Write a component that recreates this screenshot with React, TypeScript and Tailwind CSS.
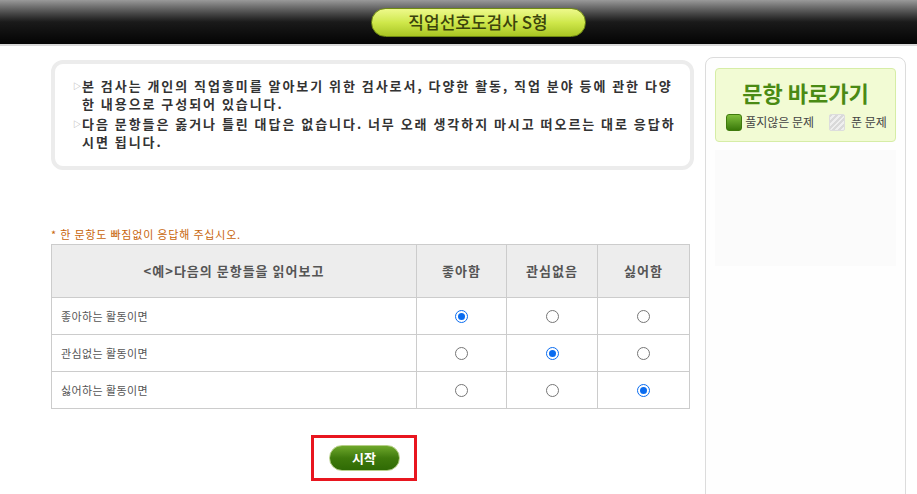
import React from "react";

const KR = { fontFamily: '"Noto Sans CJK KR", "Noto Sans", sans-serif' };

function Radio({ checked }: { checked: boolean }) {
  return checked ? (
    <span className="inline-flex h-[13px] w-[13px] items-center justify-center rounded-full border border-[#0a6cf0] bg-white">
      <span className="h-[7px] w-[7px] rounded-full bg-[#0a6cf0]" />
    </span>
  ) : (
    <span className="inline-block h-[13px] w-[13px] rounded-full border border-[#767676] bg-white" />
  );
}

export default function App() {
  const rows = [
    { label: "좋아하는 활동이면", sel: 0 },
    { label: "관심없는 활동이면", sel: 1 },
    { label: "싫어하는 활동이면", sel: 2 },
  ];
  return (
    <div className="relative h-[494px] w-[917px] overflow-hidden bg-white" style={KR}>
      {/* header */}
      <div className="flex h-[44px] items-center justify-center bg-gradient-to-b from-[#9a9a9a] via-[#1a1a1a] to-[#050505]">
        <div className="ml-[39px] flex h-[29px] w-[215px] items-center justify-center rounded-full border border-[#6f8a12] bg-gradient-to-b from-[#eef98a] via-[#cfe84a] to-[#a9c521] text-[17px] font-medium text-[#3b430c]">
          직업선호도검사 S형
        </div>
      </div>
      <div className="h-[2px] bg-[#d8d8d8]" />

      <div className="flex gap-[11px] pl-[51px]">
        {/* left column */}
        <div className="w-[643px]">
          <div className="mt-[14px] h-[110px] rounded-[12px] border-[4px] border-[#ececec] pl-[18px] pt-[13px]">
            <ul className="text-[13px] font-bold leading-[18px] tracking-[1.95px] text-[#333]">
              <li className="flex">
                <span className="w-[9px] shrink-0 text-[8px] tracking-normal text-[#aaa]">▷</span>
                <span>
                  본 검사는 개인의 직업흥미를 알아보기 위한 검사로서, 다양한 활동, 직업 분야 등에 관한 다양
                  <br />한 내용으로 구성되어 있습니다.
                </span>
              </li>
              <li className="mt-[2px] flex">
                <span className="w-[9px] shrink-0 text-[8px] tracking-normal text-[#aaa]">▷</span>
                <span>
                  다음 문항들은 옳거나 틀린 대답은 없습니다. 너무 오래 생각하지 마시고 떠오르는 대로 응답하
                  <br />시면 됩니다.
                </span>
              </li>
            </ul>
          </div>

          <div className="mt-[57px] text-[11px] leading-[14px] tracking-[0.8px] text-[#c8650a]">* 한 문항도 빠짐없이 응답해 주십시오.</div>

          <table className="mt-[3px] w-[639px] border-collapse border border-[#cccccc] text-[#555]">
            <thead>
              <tr className="h-[53px] bg-[#ededed] text-[13px] font-bold tracking-[1px]">
                <th className="w-[365px] border border-[#cccccc]">&lt;예&gt;다음의 문항들을 읽어보고</th>
                <th className="w-[90px] border border-[#cccccc]">좋아함</th>
                <th className="w-[91px] border border-[#cccccc]">관심없음</th>
                <th className="border border-[#cccccc]">싫어함</th>
              </tr>
            </thead>
            <tbody>
              {rows.map((r, i) => (
                <tr key={i} className="h-[37px]">
                  <td className="border border-[#cccccc] pl-[9px] text-[11px] tracking-[0.4px] text-[#555]">{r.label}</td>
                  {[0, 1, 2].map((c) => (
                    <td key={c} className="border border-[#cccccc] text-center align-middle">
                      <div className="flex items-center justify-center">
                        <Radio checked={r.sel === c} />
                      </div>
                    </td>
                  ))}
                </tr>
              ))}
            </tbody>
          </table>

          <div className="ml-[260px] mt-[26px] flex h-[46px] w-[106px] items-center justify-center border-[3px] border-[#e8161f]">
            <div className="flex h-[26px] w-[71px] items-center justify-center rounded-full border border-[#b7cf8a] bg-gradient-to-b from-[#6ea82a] via-[#3f7a0c] to-[#2f6a05] text-[13px] font-bold text-white">
              시작
            </div>
          </div>
        </div>

        {/* right panel */}
        <div className="mt-[11px] h-[460px] w-[201px] rounded-t-[8px] border border-[#dcdcdc] bg-[#fefefe] px-[9px] pt-[10px]">
          <div className="flex h-[74px] flex-col items-center rounded-[4px] border border-[#d6eda6] bg-[#f2fbd4]">
            <div className="mt-[9px] text-[22px] font-bold leading-[28px] text-[#4a8a14]">문항 바로가기</div>
            <div className="mt-[7px] flex items-center text-[12px] text-[#444]">
              <span className="ml-[2px] mr-[3px] h-[17px] w-[16px] rounded-[3px] border border-[#3f7a0c] bg-gradient-to-b from-[#7fbf3a] to-[#3a7a08]" />
              <span>풀지않은 문제</span>
              <span
                className="ml-[15px] mr-[6px] h-[17px] w-[16px] rounded-[2px] border border-[#ddd]"
                style={{
                  backgroundImage:
                    "repeating-linear-gradient(135deg, #d9d9d9 0 2px, #efefef 2px 4px)",
                }}
              />
              <span>푼 문제</span>
            </div>
          </div>
          <div className="mt-[8px] h-[116px] bg-[#fbfbfb]" />
        </div>
      </div>
    </div>
  );
}
